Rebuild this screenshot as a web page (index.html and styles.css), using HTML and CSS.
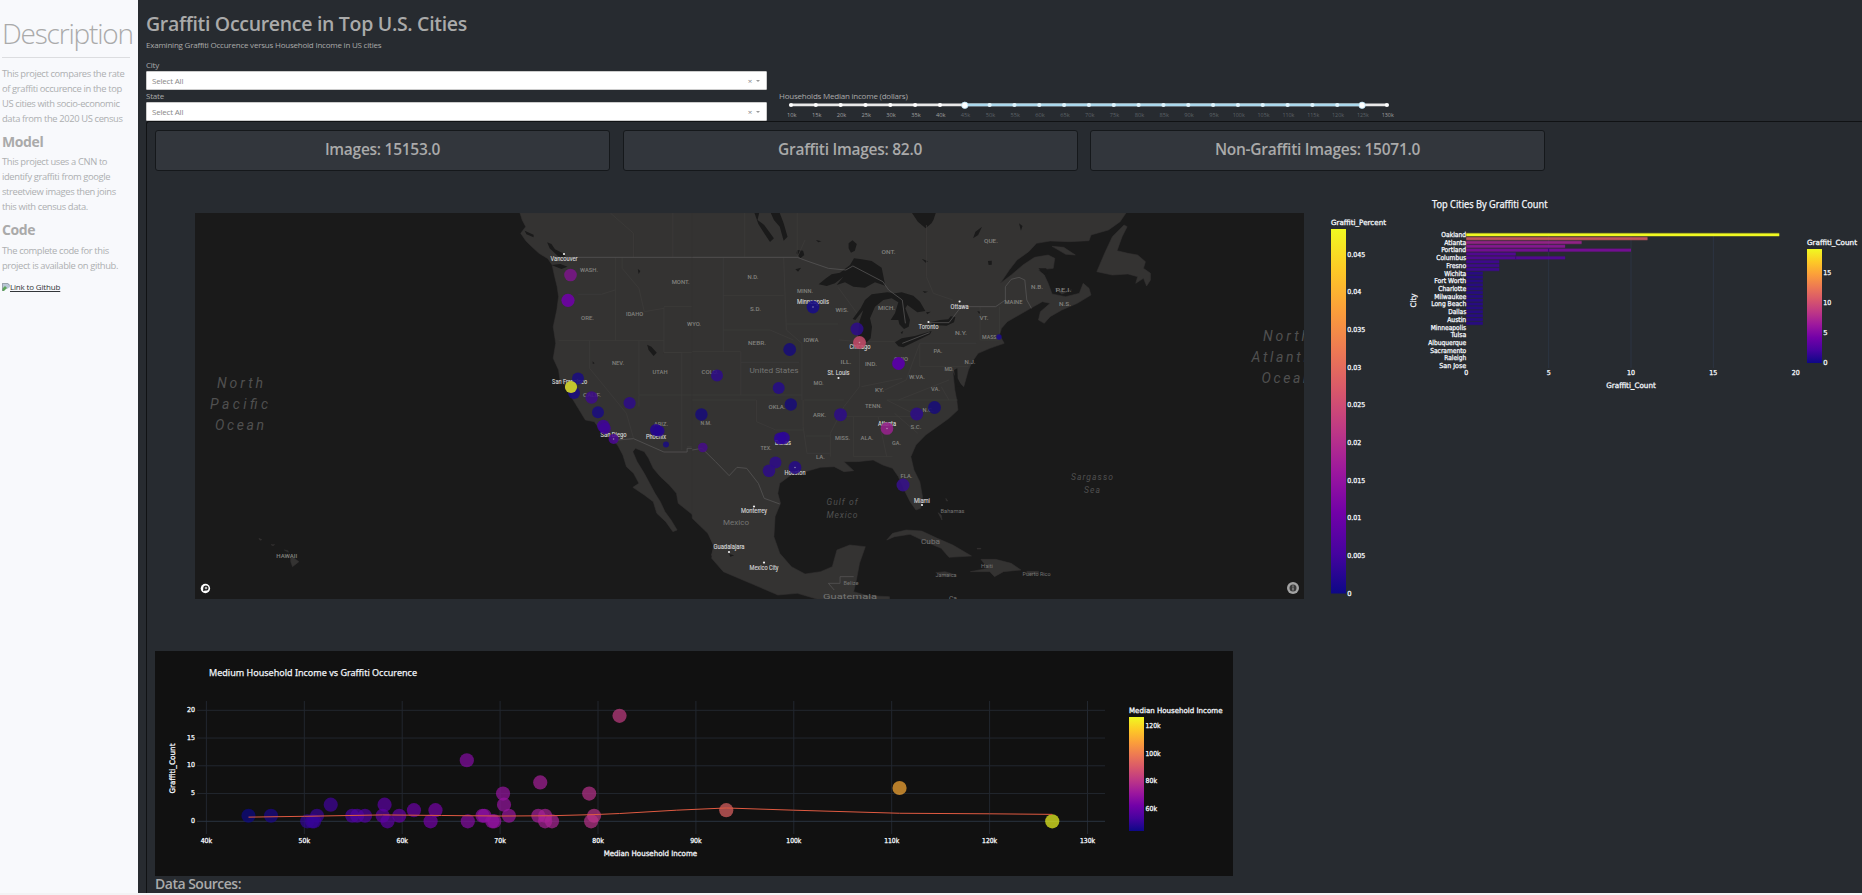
FILE: index.html
```html
<!DOCTYPE html>
<html lang="en">
<head>
<meta charset="utf-8">
<title>Graffiti Occurence in Top U.S. Cities</title>
<link rel="stylesheet" href="styles.css">
</head>
<body>
<div class="page">
  <aside class="sidebar">
    <h2 class="side-title"><span>Description</span></h2>
    <hr class="rule">
    <p class="copy c1">This project compares the rate<br>of graffiti occurence in the top<br>US cities with socio-economic<br>data from the 2020 US census</p>
    <h4 class="side-head">Model</h4>
    <p class="copy c2">This project uses a CNN to<br>identify graffiti from google<br>streetview images then joins<br>this with census data.</p>
    <h4 class="side-head">Code</h4>
    <p class="copy c3">The complete code for this<br>project is available on github.</p>
    <a class="repo" href="#"><svg class="broken" viewBox="0 0 8 8"><path d="M0 0h6l2 2v2L5 6 3 5 0 8z" fill="#b9c6d6"/><path d="M0 6l3-3 2 2-3 3H0z" fill="#5da55a"/><path d="M.4 8V.4h5.2l2 2" fill="none" stroke="#8b949c" stroke-width=".8"/></svg><span>Link to Github</span></a>
  </aside>
  <main class="main">
    <h1 class="title">Graffiti Occurence in Top U.S. Cities</h1>
    <p class="subtitle">Examining Graffiti Occurence versus Household Income in US cities</p>
    <div class="filters">
      <div class="selects">
        <label class="label">City</label>
        <div class="select"><span>Select All</span><i class="clear">×</i><i class="arrow"></i></div>
        <label class="label second">State</label>
        <div class="select"><span>Select All</span><i class="clear">×</i><i class="arrow"></i></div>
      </div>
      <div class="income">
        <label class="label wide">Households Median income (dollars)</label>
        <svg id="slider" class="chart" width="640" height="24" viewBox="779 99 640 24"></svg>
      </div>
    </div>
    <section class="panel">
      <div class="cards">
        <div class="card">Images: 15153.0</div>
        <div class="card">Graffiti Images: 82.0</div>
        <div class="card">Non-Graffiti Images: 15071.0</div>
      </div>
      <div class="row">
        <svg id="map" class="chart" width="1245" height="479" viewBox="155 172 1245 479"></svg>
        <svg id="bars" class="chart" width="462" height="479" viewBox="1400 172 462 479"></svg>
      </div>
      <svg id="scatter" class="chart scatter" width="1078" height="225" viewBox="155 651 1078 225"></svg>
      <h4 class="sources">Data Sources:</h4>
    </section>
  </main>
</div>
<script src="app.js"></script>
</body>
</html>
```
FILE: styles.css
```css
* { box-sizing: border-box; }
body { margin: 0; height: 895px; overflow: hidden; background: #f3f3f5; color: #aaa; font-family: "Open Sans", "Noto Sans", sans-serif; }
.page { display: grid; grid-template-columns: 138px 1fr; height: 893px; overflow: hidden; background: #272b30; }
h1, h2, h4, p { margin: 0; font-weight: 600; white-space: nowrap; }
.sidebar { background: #f8f9fc; padding: 14px 8px 0 2px; }
.side-title { font-size: 28px; font-weight: 300; line-height: 38px; letter-spacing: -1.2px; }
.rule { margin: 5px 0 8px; border: 0; border-top: 1px solid #dcdde0; }
.copy { font-size: 9.4px; line-height: 15px; font-weight: 400; letter-spacing: -.37px; color: #adafb1; }
.side-head { font-size: 14px; font-weight: 700; line-height: 17px; letter-spacing: -.4px; margin: 7px 0 4px; }
.c2 + .side-head { margin: 7px 0 5px; }
.repo { display: flex; align-items: center; margin-top: 9px; font-size: 8px; line-height: 10px; letter-spacing: -.17px; color: #33363a; }
.repo span { text-decoration: underline; }
.broken { width: 8px; height: 8px; }
.main { padding-left: 8px; display: flex; flex-direction: column; min-width: 0; }
.title { height: 38px; padding-top: 11px; font-size: 19.5px; line-height: 26px; letter-spacing: -.31px; }
.subtitle { font-size: 8px; font-weight: 400; line-height: 14px; letter-spacing: -.22px; }
.filters { display: flex; height: 69px; gap: 12px; padding-top: 7px; }
.selects { width: 621px; }
.label { display: block; height: 12px; font-size: 8px; line-height: 11px; letter-spacing: -.22px; }
.select { display: flex; align-items: center; height: 19px; background: #fff; border: 1px solid #ccc; border-radius: 1px; padding: 0 6px 0 5px; font-size: 8px; letter-spacing: -.2px; color: #888; }
.select span { flex: 1; }
.clear { font-style: normal; font-size: 8px; margin-right: 4px; }
.arrow { border: 2px solid transparent; border-top-color: #999; border-bottom: 0; }
.income { padding-top: 31px; }
.income .label { height: 9px; line-height: 11px; }
.chart { display: block; overflow: hidden; }
.panel { flex: 1; border: 1px solid #101214; border-right: 0; border-bottom: 0; border-radius: 3px 0 0 0; padding: 8px 0 0 8px; }
.cards { display: flex; gap: 12.5px; height: 42px; }
.card { width: 455px; height: 41px; border: 1px solid #15181b; border-radius: 3px; background: #32363c; text-align: center; font-size: 15.5px; font-weight: 600; line-height: 37px; letter-spacing: -.27px; }
.row { display: flex; margin-right: -1px; }
.sources { font-size: 14px; line-height: 16px; letter-spacing: -.5px; }
svg text { dominant-baseline: central; }
.tick { font-family: "DejaVu Sans", sans-serif; font-size: 6.8px; fill: #f2f5fa; stroke: #f2f5fa; stroke-width: .3px; }
.heading { font-family: "Noto Sans", sans-serif; font-size: 10px; fill: #f2f5fa; stroke: #f2f5fa; stroke-width: .25px; }
.mark { font-family: "Open Sans", sans-serif; font-size: 6px; }
.place { font-family: Roboto, sans-serif; }
.state { font-family: Roboto, sans-serif; font-weight: 500; fill: #82827f; }
```
FILE: app.js
```javascript
const PLASMA = ['#0d0887', '#46039f', '#7201a8', '#9c179e', '#bd3786', '#d8576b', '#ed7953', '#fb9f3a', '#fdca26', '#f0f921'];
const plasma = t => {
  const p = Math.max(0, Math.min(1, t)) * 9, i = Math.min(8, Math.floor(p)), f = p - i;
  const rgb = h => [1, 3, 5].map(k => parseInt(h.substr(k, 2), 16));
  const a = rgb(PLASMA[i]), b = rgb(PLASMA[i + 1]);
  return 'rgb(' + a.map((v, k) => Math.round(v + (b[k] - v) * f)) + ')';
};
const text = (s, x, y, o = {}) =>
  `<text class="${o.cls || 'tick'}" x="${x}" y="${y}" text-anchor="${o.anchor || 'start'}"` +
  (o.w ? ` textLength="${o.w}" lengthAdjust="spacingAndGlyphs"` : '') +
  (o.size ? ` style="font-size:${o.size}px"` : '') + (o.attr ? ' ' + o.attr : '') + `>${s}</text>`;
const gradient = id => `<defs><linearGradient id="${id}" x1="0" y1="1" x2="0" y2="0">` +
  PLASMA.map((c, i) => `<stop offset="${i / 9}" stop-color="${c}"/>`).join('') + '</linearGradient></defs>';
const line = (x1, y1, x2, y2, c) => `<path d="M${x1} ${y1}L${x2} ${y2}" stroke="${c}" fill="none"/>`;
const put = (id, s) => { document.getElementById(id).innerHTML = s; };

/* income slider */
{
  const X = i => 791 + i * 24.83;
  let s = `<rect x="791" y="103.6" width="596" height="2.6" rx="1" fill="#e9e9e9"/><rect x="${X(7)}" y="103.6" width="${X(23) - X(7)}" height="2.6" fill="#abd9ee"/>`;
  for (let i = 0; i <= 24; i++) {
    const on = i >= 7 && i <= 23;
    s += `<circle cx="${X(i)}" cy="105" r="2.1" fill="${on ? '#e0f4fc' : '#fff'}"/>`;
    s += text(10 + i * 5 + 'k', X(i) + .8, 115, { cls: 'mark', anchor: 'middle', w: i < 18 ? 9.5 : 12, attr: `fill="${on ? '#5d6267' : '#a0a0a0'}"` });
  }
  [7, 23].forEach(i => { s += `<circle cx="${X(i)}" cy="105.3" r="3.2" fill="#fff" stroke="#b6e1f5" stroke-width=".8"/>`; });
  put('slider', s);
}

/* map */
{
  const west = 'M952 39L958 60 968 80 954 100 968 122 985 140 1005 160 1030 176 1042 195 1048 225 1056 260 1060 290 1055 330 1045 380 1052 430 1045 475 1060 510 1064 540 1090 570 1098 595 1115 625 1135 660 1160 665 1180 695 1205 715 1225 735 1240 765 1250 800 1270 820 1285 850 1268 862 1300 885 1325 905 1335 940 1360 965 1380 995 1392 990 1375 960 1358 935 1345 905 1330 880 1315 850 1300 820 1280 785 1268 755 1275 745 1300 755 1312 775 1325 805 1345 830 1370 855 1390 880 1395 910 1430 940 1460 970 1480 1000 1495 1040 1488 1065 1500 1085 1530 1110 1568 1127V39Z M310 1072L320 1075 333 1085 315 1100 310 1085Z M292 1050L302 1052 304 1057Z M255 1034L265 1034 260 1037Z M221 1015L229 1019 224 1021Z';
  const westWater = 'M1028 127L1040 132 1050 148 1072 160 1080 170 1060 170 1035 145Z M965 92L990 104 990 112 970 103Z M1040 195L1065 192 1085 200 1068 207Z M1308 434L1320 440 1335 458 1326 468 1312 450Z M1282 207L1289 213 1284 222Z M1155 484L1161 490 1156 492Z M1472 127L1480 130 1476 135Z';
  const east = 'M-20 39H1095L1080 65 1050 90 1005 105 1000 122 950 125 900 123 865 130 845 155 815 180 795 210 772 250 800 225 830 195 860 172 895 165 912 175 908 205 870 210 885 225 895 250 905 282 940 290 975 280 985 250 1000 265 1005 285 970 310 930 330 900 350 885 370 870 360 875 335 900 310 880 305 850 325 820 345 790 365 775 385 770 405 782 430 745 445 715 460 700 485 690 510 678 560 665 545 650 515 655 570 660 600 663 630 640 655 610 680 580 705 555 735 542 770 550 810 565 845 572 890 567 925 555 930 540 905 525 870 510 830 495 805 470 795 445 780 405 785 370 785 395 812 370 815 345 800 310 802 270 815 240 820 205 850 200 880 207 910 193 950 190 1010 205 1060 235 1100 270 1122 310 1115 340 1100 352 1050 385 1035 425 1040 410 1090 402 1140 395 1175 430 1187 487 1190V1197H300L250 1180 200 1185 130 1150 60 1115 30 1075 35 1035 20 1000-20 955Z M1090 75L1060 110 1040 160 1020 215 1060 225 1100 222 1125 230 1120 250 1140 235 1148 258 1158 240 1158 220 1140 205 1145 185 1125 165 1100 160 1072 152 1085 110 1098 80Z M905 139L935 142 965 165 940 163Z M912 265L935 275 955 270 930 282Z M480 1020L495 1000 530 990 570 993 610 1015 650 1035 698 1068 640 1072 620 1045 580 1025 540 1003 500 1010Z M722 1078L760 1078 800 1090 825 1110 780 1115 757 1130 745 1115 695 1115 740 1105Z M606 1118L630 1115 655 1124 630 1128Z M840 1114H870V1122H840Z M612 938L620 945 622 960Z M632 895L637 903 633 902Z M712 1045H722V1047H712Z';
  const eastWater = 'M545 39H606L600 60 595 70 580 85 560 65Z M140 39H152L148 60 165 75 190 115 180 126 165 100 150 72Z M182 39H205L215 70 225 110 215 122 205 80 190 60Z M382 130L392 121 403 132 398 152 388 158 382 145Z M725 80L715 105 702 115 708 95Z M820 70L829 78 825 92Z M250 150L265 152 268 165 258 175 248 160Z M298 120L312 124 304 127Z M245 208L260 203 252 215Z M570 176L586 184 580 188Z M740 183L750 182 750 194 742 195Z M870 205H890L895 222 880 218Z M75 1062L88 1066 78 1070Z';
  const lakes = 'M-34 238L-12 220 5 208 30 203 60 180 72 160 95 163 125 168 155 188 166 242 135 232 105 248 70 245 45 232 20 240 40 215 15 235-10 243Z M172 262L125 268 105 285 92 310 68 342 76 345 100 315 88 350 84 395 110 412 122 400 126 365 120 340 135 305 160 285 185 280 205 292 195 325 182 345 205 345 208 358 222 372 236 365 240 345 226 310 232 300 262 322 286 318 270 290 250 272 215 262 195 265Z M195 412L215 400 255 393 305 378 300 388 265 405 220 427 205 424Z M300 352L330 345 355 343 362 334 376 336 372 352 350 362 310 360Z M372 495L382 490 383 520 396 545 380 545Z M212 382L220 378 216 388Z M288 322L302 320 292 328Z M278 258L294 260 284 264Z M442 318L450 320 448 328Z';
  const westLines = 'M1115 283L1180 283 1218 270M1219 172V422M1060 422H1355M1147 422V505L1250 640 1270 715M1285 422V620M1238 172V205L1285 265 1300 335 1355 325M1355 320V458H1405V585M1285 585H1568M1355 458H1568M1520 172V458M1355 320H1520M1405 585V750M1545 585V740H1420M1380 39V172M1205 39L1270 100V172M1520 287H1568';
  const eastLines = 'M-20 172H250M60 172V455M60 287H215M215 172L222 390 262 430V600M-20 455H105V585M60 390H180L240 420M105 487H255M-20 585H262M-20 600H145V665L195 690 265 690M265 600V680L275 760 335 760M222 372H355M268 600H370M358 420L410 425V560L370 620 335 700V770M355 262L410 350M411 425H500M365 650H565L480 600H662M395 650V770H495M458 650L480 770M460 578L530 540 565 430V500H690M415 560L520 535M565 430H710M720 320V420L770 420M770 320V400M500 640L560 700M620 560L640 600M272 708H335M115 39V172M250 39V172M582 75V230L600 280 650 300M270 120L250 172M510 600L640 540';
  const borderWest = 'M1110 172H1568M1225 720L1270 716 1355 756H1420V745H1465L1505 785 1510 805 1540 827 1560 803 1568 803';
  const borderEast = 'M-20 172H250L280 185 330 205 375 210 393 198 470 245 485 270 520 300 528 370M520 430L590 398M590 368H640L668 325 690 320H760L785 300 785 260 800 238 820 232 835 240 840 300 852 325M-20 750L5 745 40 785 75 827 95 802 120 805 150 850 165 895 205 912M330 1150H360V1130H395M330 1150L345 1170';
  const border = (d, c, w) => `<path d="${d}" fill="none" stroke="${c}" stroke-width="${w}" vector-effect="non-scaling-stroke"/>`;
  const half = (x, k, land, water, lines, b, extra = '') => `<g transform="translate(${x} 200) scale(${1 / k} ${1 / 3})"><path d="${land}" fill="#343332" stroke="#343332" stroke-width="1.5" stroke-linejoin="round"/><path d="${water}" fill="#1a1a1a"/>${border(lines, '#3d3c3b', .7)}</g>${extra}<g transform="translate(${x} 200) scale(${1 / k} ${1 / 3})">${border(b, '#555454', .8)}</g>`;
  let s = gradient('gm') + '<clipPath id="frame"><rect x="195" y="213" width="1109" height="386"/></clipPath><g clip-path="url(#frame)"><rect x="195" y="213" width="1109" height="386" fill="#1a1a1a"/>';
  s += half(180, 2.8, west, westWater, westLines, borderWest);
  s += half(700, 2.5705, east, eastWater, eastLines, borderEast, `<path transform="translate(830 205) scale(${1 / 3})" d="${lakes}" fill="#1a1a1a"/>`);

  const states = [['WASH.', 589, 270, 18], ['ORE.', 587.5, 318, 13], ['IDAHO', 634.6, 313.6, 17], ['MONT.', 680.7, 281.6, 18], ['WYO.', 694, 323.5, 14], ['NEV.', 618, 362.5, 12], ['UTAH', 660, 371.5, 15], ['COLO.', 710, 372, 17], ['ARIZ.', 661, 423.5, 14], ['N.M.', 706, 422.6, 11], ['CALIF.', 592, 394.5, 18], ['N.D.', 753, 277, 11], ['S.D.', 755.6, 308.5, 11], ['NEBR.', 757, 342.5, 18], ['IOWA', 811, 340, 15], ['MINN.', 805, 290.5, 16], ['WIS.', 842, 310, 13], ['MICH.', 886.5, 307.5, 17], ['ILL.', 846, 362, 11], ['IND.', 871, 364, 12], ['OHIO', 901, 358.5, 14], ['W.VA.', 917, 377, 16], ['PA.', 938, 351, 9], ['N.Y.', 961, 332.5, 12], ['VT.', 984, 317.5, 9], ['MAINE', 1013.5, 302, 18], ['MASS.', 990, 337, 16], ['N.J.', 970, 361.5, 11], ['MD.', 949, 369, 9], ['VA.', 935.5, 388.5, 9], ['KY.', 879.5, 389.5, 9], ['TENN.', 873.5, 405.5, 17], ['ARK.', 819.6, 414.6, 13], ['OKLA.', 777, 406.5, 17], ['MO.', 818.5, 382.5, 10], ['TEX.', 766, 448, 11], ['LA.', 820.5, 456.5, 9], ['MISS.', 842.5, 437.5, 15], ['ALA.', 867, 437.5, 13], ['GA.', 896.5, 442.5, 9], ['S.C.', 916, 427, 11], ['N.C.', 928, 410, 11], ['FLA.', 906.5, 475.5, 12], ['ONT.', 888.5, 252, 14], ['QUE.', 991, 241, 14], ['N.B.', 1037, 287, 12], ['P.E.I.', 1063.5, 290, 16], ['N.S.', 1065, 304, 12], ['HAWAII', 286.8, 555.5, 21]];
  states.forEach(([n, x, y, w]) => { s += text(n, x, y, { cls: 'state', anchor: 'middle', w, size: 5.4 }); });
  [['United States', 774, 370, 49, 8], ['Mexico', 736, 522.5, 26, 8], ['Cuba', 930.5, 541, 19, 7.5], ['Bahamas', 952.5, 510.5, 24, 6], ['Jamaica', 946, 574, 21, 6], ['Haiti', 987, 565, 12, 6], ['Puerto Rico', 1036.5, 573.5, 28, 6], ['Belize', 851, 582, 15, 6], ['Guatemala', 850, 597, 54, 6.5], ['Ca', 953, 598.5, 8, 6.5]]
    .forEach(([n, x, y, w, z]) => { s += text(n, x, y, { cls: 'place', anchor: 'middle', w, size: z, attr: 'fill="#757574"' }); });
  [['North', 240, 383, 46, 14], ['Pacific', 239, 404, 58, 14], ['Ocean', 239.5, 425, 49, 14], ['North', 1286, 336, 46, 14], ['Atlantic', 1284, 356.5, 65, 14], ['Ocean', 1286, 377.5, 49, 14], ['Gulf of', 842, 502, 31, 8.5], ['Mexico', 842, 515, 31, 8.5], ['Sargasso', 1092, 477, 42, 8.5], ['Sea', 1092, 489.5, 16, 8.5]]
    .forEach(([n, x, y, w, z]) => { s += `<text class="place" x="${x}" y="${y}" text-anchor="middle" textLength="${w}" font-style="italic" style="font-size:${z}px" fill="#505050">${n}</text>`; });
  [['Vancouver', 564, 259, 27, 254], ['San Francisco', 569.6, 382.3, 35], ['San Diego', 613.6, 434.5, 26], ['Phoenix', 656, 436.5, 20], ['Guadalajara', 729, 547.3, 31, 552], ['Mexico City', 764, 567.8, 29, 562.6], ['Monterrey', 754, 511.3, 26, 506.5], ['Minneapolis', 813, 302.3, 32], ['Chicago', 860, 347.3, 21], ['St. Louis', 838.5, 373.3, 22, 378], ['Toronto', 928.5, 327.3, 20, 322], ['Ottawa', 959.6, 306.7, 18, 301.5], ['Atlanta', 887, 424, 18], ['Houston', 795, 472.7, 21], ['Dallas', 783, 443.2, 16], ['Miami', 922, 500.7, 16, 505]]
    .forEach(([n, x, y, w, dot]) => { s += text(n, x, y, { cls: 'place', anchor: 'middle', w, size: 6.5, attr: 'fill="#cfcfcf" stroke="#cfcfcf" stroke-width=".15"' }) + (dot ? `<circle cx="${x}" cy="${dot}" r="1.1" fill="#eee"/>` : ''); });

  [[570.5, 275, 6.3, '#7a1688'], [568, 300.3, 6.6, '#7000a8'], [578, 378.5, 6, '#1a0d80'], [574, 393, 6, '#1a0d80'], [571, 387, 6.1, '#c4c62e', 1], [591.6, 397.5, 6.2, '#3d0d86'], [598, 412.2, 6, '#1a0d80'], [603.3, 426, 6.2, '#3f0595'], [605, 428.5, 5.8, '#3f0595'], [613.6, 439, 5, '#4b0992'], [629.6, 403, 6.1, '#2d0d86'], [656, 430, 6, '#240590'], [659, 431, 5.5, '#240590'], [666, 444.5, 3, '#1a0d80'], [702.8, 447.5, 4.8, '#450c86'], [701.4, 414.5, 6.2, '#180d78'], [717, 375.5, 6, '#2d0d86'], [778.7, 388, 6, '#260c86'], [790.8, 404.5, 6.2, '#180d78'], [789.7, 349.5, 6.4, '#180d78'], [813, 307, 6.4, '#180d88'], [857, 329, 6.5, '#2d0d86'], [859.5, 342.5, 6.5, '#c04a68'], [898.5, 363.5, 6.4, '#5702a0', 1], [840.5, 414.7, 6.5, '#2d0d86'], [916.7, 414, 6.5, '#2d0d86'], [934.5, 407.5, 6.5, '#180d78'], [887, 428.5, 6.3, '#96228c'], [999, 337, 2.7, '#1c0b8c'], [783.5, 438, 6.2, '#2c0598'], [780, 438.5, 6, '#2c0598'], [775.5, 462.5, 6, '#2d0d86'], [769, 470.7, 6.3, '#2d0d86'], [795, 467.5, 6.4, '#250a86'], [903, 485, 6.5, '#35108a']]
    .forEach(([x, y, r, c, o]) => { s += `<circle cx="${x}" cy="${y}" r="${r}" fill="${c}" fill-opacity="${o || .88}"/>`; });
  [[859.5, 342.5], [887, 428.5], [813, 307], [795, 467.5], [613.6, 439]].forEach(([x, y]) => { s += `<circle cx="${x}" cy="${y}" r=".8" fill="#ddd" fill-opacity=".55"/>`; });
  s += '<circle cx="205.4" cy="588.5" r="4.7" fill="#fff"/><circle cx="205.9" cy="588" r="2.6" fill="#1a1a1a"/><path d="M203 591.2l.6-3.2 2 2z" fill="#1a1a1a"/><path d="M206 586.2l.5 1.3 1.3.5-1.3.5-.5 1.3-.5-1.3-1.3-.5 1.3-.5z" fill="#fff"/>';
  s += '<circle cx="1293" cy="588" r="6" fill="#a3a3a3"/><circle cx="1293" cy="588" r="3.5" fill="#3a3a3a"/><path d="M1293 585.6v1.1M1293 587.4v3" stroke="#a3a3a3" stroke-width="1.1"/></g>';
  s += '<rect x="1331" y="229" width="15" height="364.5" fill="url(#gm)"/>' + text('Graffiti_Percent', 1331, 222.5, { w: 55, size: 7.2 });
  for (let i = 0; i < 10; i++) s += text(String(+(i * .005).toFixed(3)), 1347.3, 593.7 - i * 37.67, { w: i === 0 ? 4.3 : i % 2 ? 18 : 14 });
  put('map', s);
}

/* city bars */
{
  const X = v => 1466.3 + v * 16.47, Y = i => 234.7 + i * 3.853;
  let s = gradient('gb') + text('Top Cities By Graffiti Count', 1432, 203.7, { cls: 'heading', w: 115.5 });
  [5, 10, 15].forEach(v => { s += line(X(v), 233, X(v), 368, '#2c3543'); });
  const bars = [[19, 19], [11, 11], [7, 7], [6, 6], [10, 5, 5], [3, 3], [6, 3, 3], [2, 2], [2, 2], [2, 2]];
  for (let i = 0; i < 14; i++) bars.push([1, 1]);
  bars.forEach(([v, c, cut], i) => {
    const col = plasma(c / 19);
    s += `<rect x="1466.3" y="${Y(i) - 1.93}" width="${v * 16.47}" height="3.86" fill="${col}" fill-opacity=".35"/><rect x="1466.3" y="${Y(i) - 1.2}" width="${v * 16.47}" height="2.5" fill="${col}" fill-opacity="${i ? .75 : 1}"/>`;
    if (cut) s += line(X(cut), Y(i) - 1.9, X(cut), Y(i) + 1.9, '#3a0a70');
  });
  [['Oakland', 25], ['Atlanta', 22], ['Portland', 25], ['Columbus', 30], ['Fresno', 20], ['Wichita', 22], ['Fort Worth', 32], ['Charlotte', 28], ['Milwaukee', 32], ['Long Beach', 35], ['Dallas', 18], ['Austin', 19], ['Minneapolis', 35.5], ['Tulsa', 15.5], ['Albuquerque', 38], ['Sacramento', 36], ['Raleigh', 22], ['San Jose', 27]]
    .forEach(([n, w], i) => { s += text(n, 1466.2, Y(i * 2) + .35, { anchor: 'end', w }); });
  [0, 5, 10, 15, 20].forEach(v => { s += text(v, X(v), 372.7, { anchor: 'middle', w: v > 5 ? 8 : 4 }); });
  s += text('Graffiti_Count', 1631, 385.5, { anchor: 'middle', w: 49.5, size: 7.5 }) + text('City', 1413.7, 300.5, { anchor: 'middle', w: 14, size: 7.5, attr: 'transform="rotate(-90 1413.7 300.5)"' });
  s += '<rect x="1807" y="249" width="15" height="114" fill="url(#gb)"/>' + text('Graffiti_Count', 1807, 242.5, { w: 50, size: 7.2 });
  [15, 10, 5, 0].forEach((v, i) => { s += text(v, 1823.3, 272.7 + i * 30, { w: v > 5 ? 8 : 4.3 }); });
  put('bars', s);
}

/* income scatter */
{
  const X = v => 206.4 + (v - 40) * 9.79, Y = v => 821.3 - v * 5.55;
  let s = gradient('gs') + '<rect x="155" y="651" width="1078" height="225" fill="#111"/>' + text('Medium Household Income vs Graffiti Occurence', 209, 672.2, { cls: 'heading', w: 208, size: 9.5 });
  for (let v = 40; v <= 130; v += 10) s += line(X(v), 701, X(v), 834, '#22272f') + text(v + 'k', X(v), 841, { anchor: 'middle', w: v > 90 ? 15 : 11.5 });
  for (let v = 0; v <= 20; v += 5) s += line(197, Y(v), 1105, Y(v), v ? '#22272f' : '#2a3440') + text(v, 195, Y(v) - .5, { anchor: 'end', w: v > 5 ? 8 : 4 });
  [[44.3, 1], [46.6, 1], [50.3, 0], [51, 0], [51.3, 1], [50.8, 0], [52.7, 3], [54.9, 1], [55.4, 1], [56.2, 1], [58.2, 3], [58, 1], [58.5, 0], [59.7, 1], [61.2, 2], [63.4, 2], [62.9, 0], [66.6, 11], [66.7, 0], [68.2, 1], [68.4, 1], [69.2, 0], [69.4, 0], [70.3, 5], [70.4, 3], [70.9, 1], [73.9, 1], [74.1, 7], [74.6, 1], [74.6, 0], [75.3, 0], [79.1, 5], [79.3, 0], [79.6, 1], [82.2, 19], [93.1, 2], [110.8, 6], [126.4, 0]]
    .forEach(([v, n]) => { s += `<circle cx="${X(v)}" cy="${Y(n)}" r="7.1" fill="${plasma((v - 44.3) / 82.1)}" fill-opacity=".7"/>`; });
  s += '<path fill="none" stroke="#e05a41" d="M' + [[44.3, .75], [50, .9], [58, 1.15], [64, 1.05], [70, .95], [75, 1], [79.5, 1.2], [82.2, 1.4], [88, 2], [93.1, 2.4], [100, 2], [110.8, 1.45], [120, 1.35], [126.4, 1.25]].map(([v, n]) => X(v) + ' ' + Y(n)).join('L') + '"/>';
  s += text('Median Household Income', 650.4, 853.3, { anchor: 'middle', w: 93.5, size: 7.5 }) + text('Graffiti_Count', 172.7, 768.5, { anchor: 'middle', w: 50, size: 7.5, attr: 'transform="rotate(-90 172.7 768.5)"' });
  s += '<rect x="1129" y="717" width="15" height="114" fill="url(#gs)"/>' + text('Median Household Income', 1129, 710.6, { w: 93.5, size: 7.2 });
  [120, 100, 80, 60].forEach((v, i) => { s += text(v + 'k', 1145.5, 725.7 + i * 27.8, { w: v > 90 ? 15 : 11.5 }); });
  put('scatter', s);
}
```
